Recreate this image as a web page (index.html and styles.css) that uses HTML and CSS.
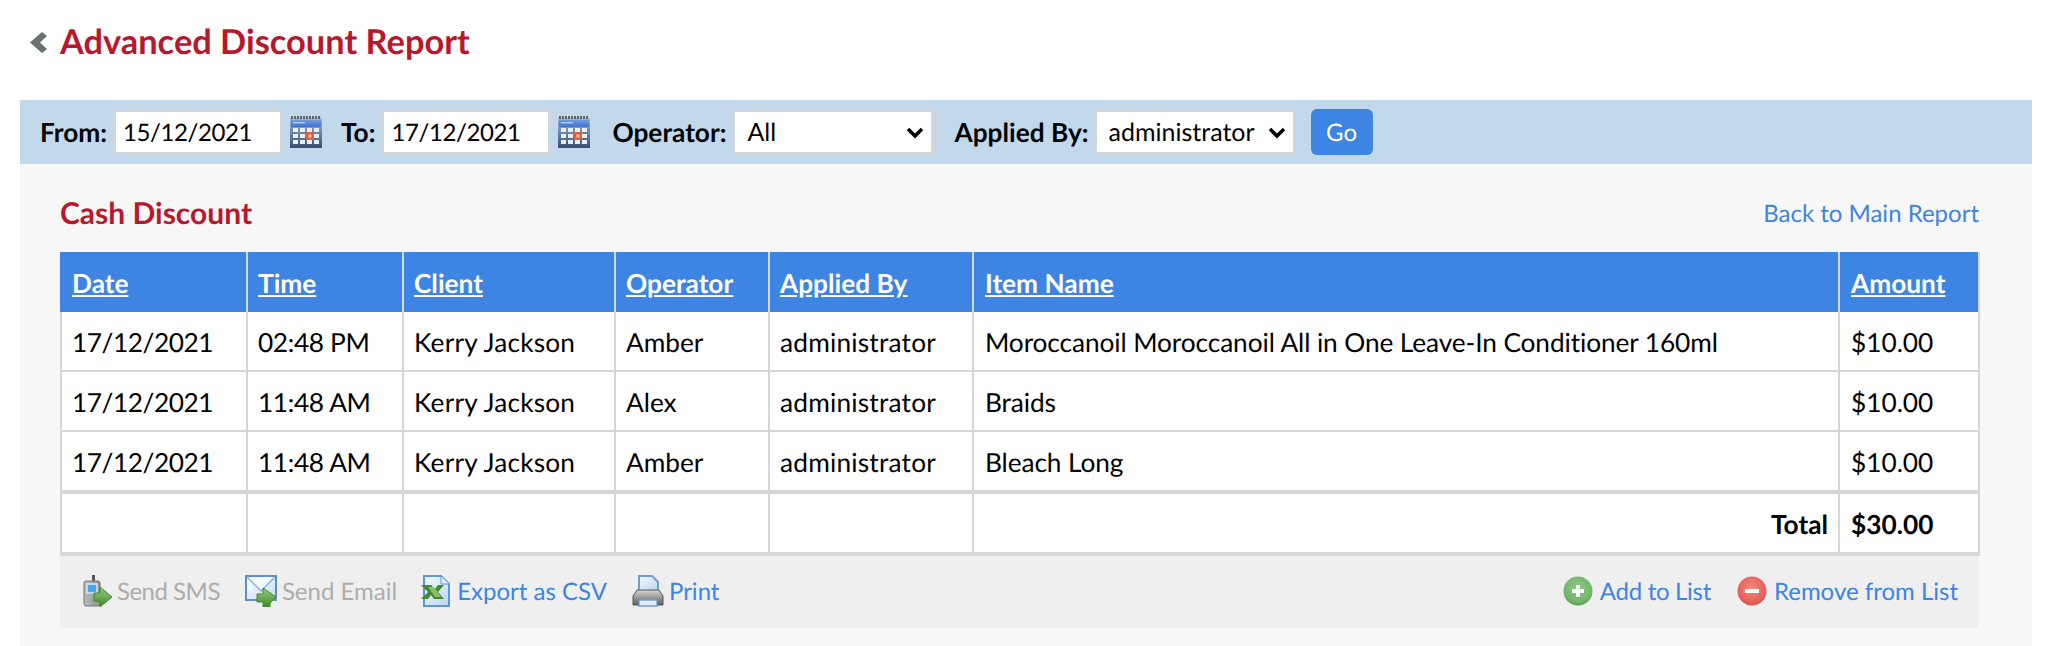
FILE: index.html
```html
<!DOCTYPE html>
<html lang="en">
<head>
<meta charset="utf-8">
<title>Advanced Discount Report</title>
<link rel="stylesheet" href="styles.css">
</head>
<body>
<svg class="defs" width="0" height="0" aria-hidden="true">
  <defs>
    <linearGradient id="calBody" x1="0" y1="0" x2="0" y2="1"><stop offset="0" stop-color="#9db8dc"/><stop offset="1" stop-color="#35506f"/></linearGradient>
    <linearGradient id="calHead" x1="0" y1="0" x2="0" y2="1"><stop offset="0" stop-color="#6f9ce0"/><stop offset="1" stop-color="#3f72c9"/></linearGradient>
    <linearGradient id="arrow" x1="0" y1="0" x2="0" y2="1"><stop offset="0" stop-color="#9ccb7c"/><stop offset="1" stop-color="#3f8a2c"/></linearGradient>
    <linearGradient id="phone" x1="0" y1="0" x2="1" y2="0"><stop offset="0" stop-color="#b9bdbd"/><stop offset="1" stop-color="#8b8f8f"/></linearGradient>
    <linearGradient id="mail" x1="0" y1="0" x2="1" y2="1"><stop offset="0" stop-color="#ffffff"/><stop offset="1" stop-color="#c5daf2"/></linearGradient>
    <linearGradient id="doc" x1="0" y1="0" x2="1" y2="1"><stop offset="0" stop-color="#f3f8fe"/><stop offset="1" stop-color="#bcd6f2"/></linearGradient>
    <linearGradient id="printer" x1="0" y1="0" x2="0" y2="1"><stop offset="0" stop-color="#d6d6d6"/><stop offset="1" stop-color="#5c5c5c"/></linearGradient>
    <radialGradient id="plus" cx=".5" cy=".4" r=".6"><stop offset="0" stop-color="#8fc985"/><stop offset=".8" stop-color="#74b56c"/><stop offset="1" stop-color="#5d9a57"/></radialGradient>
    <radialGradient id="minus" cx=".5" cy=".4" r=".6"><stop offset="0" stop-color="#f08a80"/><stop offset=".8" stop-color="#e8605a"/><stop offset="1" stop-color="#c75a52"/></radialGradient>
    <symbol id="i-cal" viewBox="0 0 32 32">
      <rect x="0" y="2" width="32" height="30" fill="url(#calBody)"/>
      <path d="M1 1.500h30" stroke="#666" stroke-width="3" stroke-dasharray="2 1"/>
      <rect x="1" y="4" width="30" height="7" fill="url(#calHead)"/>
      <rect x="3" y="6" width="12" height="1.500" fill="#a9c6ee"/>
      <g fill="#e9f0f9">
        <rect x="3" y="12" width="5" height="4"/><rect x="10" y="12" width="5" height="4"/><rect x="17" y="12" width="5" height="4"/><rect x="24" y="12" width="5" height="4"/>
        <rect x="3" y="18" width="5" height="4"/><rect x="10" y="18" width="5" height="4"/><rect x="24" y="18" width="5" height="4"/>
        <rect x="3" y="24" width="5" height="4"/><rect x="10" y="24" width="5" height="4"/><rect x="17" y="24" width="5" height="4"/><rect x="24" y="24" width="5" height="4"/>
      </g>
      <rect x="16" y="16" width="8" height="8" fill="#e2603a"/>
      <rect x="18.500" y="18.500" width="3" height="3" fill="#f2c4b4"/>
    </symbol>
    <symbol id="i-sms" viewBox="0 0 30 32">
      <rect x="9" y="0" width="3" height="7" fill="#555"/>
      <rect x="1" y="6" width="16" height="25" rx="2" fill="url(#phone)" stroke="#777"/>
      <rect x="4" y="9" width="10" height="9" fill="#4fa3ec" stroke="#d6ecfb" stroke-width="1.500"/>
      <path d="M11 18h6v-6l12 10-12 10v-6h-6z" fill="url(#arrow)" stroke="#3b8a2c"/>
    </symbol>
    <symbol id="i-mail" viewBox="0 0 32 32">
      <rect x="1" y="1" width="30" height="24" fill="url(#mail)" stroke="#5f8ec8" stroke-width="2"/>
      <path d="M2 2l14 14L30 2" fill="#f3f8fe" stroke="#8db2de" stroke-width="1.500"/>
      <path d="M12 19h6v-6l13 9-6 6v4h-7v-5h-6z" fill="url(#arrow)" stroke="#3b8a2c"/>
    </symbol>
    <symbol id="i-xls" viewBox="0 0 30 32">
      <path d="M3 1h17l8 8v22H3z" fill="url(#doc)" stroke="#5b96d8" stroke-width="2"/>
      <path d="M20 1v8h8" fill="#e2eefb" stroke="#5b96d8"/>
      <path d="M0 10h10l4 4 3-4h6l-6 7 6 7H13l-3-4-3 4H0l7-7z" fill="#3f8a2c"/>
      <path d="M7 12h6l7 10h-6z" fill="#8abf6a"/>
    </symbol>
    <symbol id="i-print" viewBox="0 0 32 32">
      <path d="M7 1h13l6 6v10H7z" fill="url(#doc)" stroke="#6f9fd6" stroke-width="2"/>
      <path d="M5 15h22l4 6v9H1v-9z" fill="url(#printer)" stroke="#555"/>
      <rect x="7" y="25" width="18" height="6" fill="#e4eefa" stroke="#6f9fd6" stroke-width="1.500"/>
    </symbol>
    <symbol id="i-plus" viewBox="0 0 30 30">
      <circle cx="15" cy="15" r="14.500" fill="url(#plus)"/>
      <path d="M15 9v12M9 15h12" stroke="#fff" stroke-width="4"/>
    </symbol>
    <symbol id="i-minus" viewBox="0 0 30 30">
      <circle cx="15" cy="15" r="14.500" fill="url(#minus)"/>
      <path d="M8 15h14" stroke="#fff" stroke-width="4"/>
    </symbol>
  </defs>
</svg>

<header class="page-head">
  <a class="back" href="#" aria-label="Back">
    <svg class="back-icon" viewBox="0 0 17 21"><path d="M12 0l5 4-7 6.500 7 6.500-5 4L0 10.500z" fill="#6b7071"/></svg>
  </a>
  <h1 class="title">Advanced Discount Report</h1>
</header>

<form class="filter">
  <label class="f-label f-from" for="from">From:</label>
  <input class="f-input" id="from" type="text" value="15/12/2021">
  <svg class="cal"><use href="#i-cal"/></svg>
  <label class="f-label f-to" for="to">To:</label>
  <input class="f-input" id="to" type="text" value="17/12/2021">
  <svg class="cal"><use href="#i-cal"/></svg>
  <label class="f-label f-op" for="op">Operator:</label>
  <span class="sel sel-op">
    <select id="op" class="f-select"><option>All</option></select>
    <svg class="chev" viewBox="0 0 18 12"><path d="M2 2l7 7 7-7" fill="none" stroke="#000" stroke-width="3.500"/></svg>
  </span>
  <label class="f-label f-by" for="by">Applied By:</label>
  <span class="sel sel-by">
    <select id="by" class="f-select"><option>administrator</option></select>
    <svg class="chev" viewBox="0 0 18 12"><path d="M2 2l7 7 7-7" fill="none" stroke="#000" stroke-width="3.500"/></svg>
  </span>
  <button class="go" type="button">Go</button>
</form>

<main class="panel">
  <div class="panel-head">
    <h2 class="subtitle">Cash Discount</h2>
    <a class="link" href="#">Back to Main Report</a>
  </div>
  <table class="report">
    <colgroup>
      <col class="c1"><col class="c2"><col class="c3"><col class="c4"><col class="c5"><col class="c6"><col class="c7">
    </colgroup>
    <thead>
      <tr>
        <th><a href="#">Date</a></th><th><a href="#">Time</a></th><th><a href="#">Client</a></th><th><a href="#">Operator</a></th><th><a href="#">Applied By</a></th><th class="item"><a href="#">Item Name</a></th><th class="amt"><a href="#">Amount</a></th>
      </tr>
    </thead>
    <tbody>
      <tr><td class="date">17/12/2021</td><td class="time">02:48 PM</td><td class="wide">Kerry Jackson</td><td>Amber</td><td class="wide">administrator</td><td class="item name">Moroccanoil Moroccanoil All in One Leave-In Conditioner 160ml</td><td class="amt">$10.00</td></tr>
      <tr><td class="date">17/12/2021</td><td class="time">11:48 AM</td><td class="wide">Kerry Jackson</td><td>Alex</td><td class="wide">administrator</td><td class="item name">Braids</td><td class="amt">$10.00</td></tr>
      <tr class="last"><td class="date">17/12/2021</td><td class="time">11:48 AM</td><td class="wide">Kerry Jackson</td><td>Amber</td><td class="wide">administrator</td><td class="item name">Bleach Long</td><td class="amt">$10.00</td></tr>
    </tbody>
    <tfoot>
      <tr><td></td><td></td><td></td><td></td><td></td><td class="total-label">Total</td><td class="total amt">$30.00</td></tr>
    </tfoot>
  </table>
  <div class="actions">
    <div class="act-group">
      <span class="act disabled a-sms"><svg class="ico w30"><use href="#i-sms"/></svg>Send SMS</span>
      <span class="act disabled a-mail"><svg class="ico w32"><use href="#i-mail"/></svg>Send Email</span>
      <a class="act a-xls" href="#"><svg class="ico w30"><use href="#i-xls"/></svg>Export as CSV</a>
      <a class="act a-print" href="#"><svg class="ico w32"><use href="#i-print"/></svg>Print</a>
    </div>
    <div class="act-group">
      <a class="act a-add" href="#"><svg class="ico w30 round"><use href="#i-plus"/></svg>Add to List</a>
      <a class="act a-rem" href="#"><svg class="ico w30 round"><use href="#i-minus"/></svg>Remove from List</a>
    </div>
  </div>
</main>
</body>
</html>
```

FILE: styles.css
```css
* { box-sizing: border-box; }
html, body { margin: 0; padding: 0; background: #fff; }
body { font-family: Lato, "Open Sans", sans-serif; font-size: 24px; color: #000; height: 646px; overflow: hidden; text-rendering: geometricPrecision; }
.defs { display: block; height: 0; }

.page-head { display: flex; align-items: center; height: 100px; padding: 0 0 16px 30px; }
.back { display: flex; width: 30px; }
.back-icon { width: 17px; height: 21px; }
.title { margin: 0; font-size: 34.4px; font-weight: 700; color: #b9172d; line-height: 1.2; }

.filter { display: flex; align-items: center; height: 64px; margin-left: 20px; width: 2012px; padding-left: 20px; background: #c2d9ec; }
.f-label { font-size: 26.25px; font-weight: 700; line-height: 1; white-space: nowrap; }
.f-input, .f-select { height: 44px; border: 2px solid #d6d6d6; background: #fff; font-family: inherit; font-size: 24px; text-rendering: inherit; color: #000; border-radius: 0; outline: none; }
.f-input { width: 168px; padding: 0 7px; margin-left: 7px; letter-spacing: -.4px; }
.cal { width: 32px; height: 32px; margin-left: 8px; flex: none; filter: blur(.4px); }
.f-to { margin-left: 19px; }
.f-op { margin-left: 22px; }
.f-by { margin-left: 21px; }
.sel { position: relative; display: block; flex: none; margin-left: 7px; }
.sel-op { width: 200px; }
.sel-by { width: 200px; margin-left: 6px; }
.f-select { display: block; width: 100%; padding: 0 0 0 12px; font-size: 25px; appearance: none; -webkit-appearance: none; }
.chev { position: absolute; right: 9px; top: 17px; width: 18px; height: 12px; pointer-events: none; }
.go { width: 62px; height: 46px; margin-left: 16px; border: 0; border-radius: 6px; background: #3e84e3; color: #fff; font-family: inherit; font-size: 24px; text-rendering: inherit; padding: 0; }

.panel { margin-left: 20px; width: 2012px; height: 482px; padding: 0 52px 0 40px; background: #f7f7f7; }
.panel-head { display: flex; justify-content: space-between; align-items: center; height: 88px; padding: 10px 0 0; }
.subtitle { margin: 0; font-size: 30px; font-weight: 700; color: #b9172d; line-height: 1.2; }
.link, .act { color: #3e84e3; text-decoration: none; }
.link { margin-right: 1px; }

.report { width: 1920px; table-layout: fixed; border-collapse: separate; border-spacing: 0; background: #fff; font-size: 26.25px; }
.c1 { width: 188px; } .c2 { width: 156px; } .c3 { width: 212px; } .c4 { width: 154px; }
.c5 { width: 204px; } .c6 { width: 866px; } .c7 { width: 140px; }
.report th, .report td { padding: 0 10px; text-align: left; font-weight: 400; border-right: 2px solid #d6d6d6; white-space: nowrap; }
.report th:first-child, .report td:first-child { border-left: 2px solid #d6d6d6; }
.report th { height: 60px; padding-top: 2px; background: #3e84e3; font-weight: 700; }
.report th:first-child { border-left-color: #3e84e3; }
.report th a { color: #fff; text-decoration: underline; }
.report td { height: 60px; padding-top: 1px; border-bottom: 2px solid #d6d6d6; }
.report tr.last td { height: 62px; border-bottom-width: 4px; }
.report tfoot td { height: 62px; border-bottom-width: 4px; }
.report .item { padding-left: 11px; }
.report .amt { padding-left: 11px; }
.report .name { letter-spacing: -.1px; }
.report .date { letter-spacing: -.45px; }
.report .time { letter-spacing: -.35px; }
.report .wide { letter-spacing: .2px; }
.report .total-label { text-align: right; font-weight: 700; }
.report .total { font-weight: 700; }

.actions { display: flex; justify-content: space-between; align-items: center; width: 1918px; height: 72px; padding: 0 20px 2px 23px; background: #efefef; }
.act-group { display: flex; align-items: center; }
.act { display: flex; align-items: center; }
.disabled { color: #adadad; }
.ico { height: 32px; flex: none; filter: blur(.4px); }
.w30 { width: 30px; }
.w32 { width: 32px; }
.round { height: 30px; }
.a-sms { letter-spacing: -.5px; }
.a-sms .ico { margin-right: 4px; }
.a-mail { margin-left: 25px; }
.a-mail .ico { margin-right: 5px; }
.a-xls { margin-left: 24px; }
.a-xls .ico { margin-right: 6px; }
.a-print { margin-left: 25px; }
.a-print .ico { margin-right: 5px; }
.a-add { letter-spacing: -.3px; }
.a-add .ico { margin-right: 7px; }
.a-rem { margin-left: 26px; }
.a-rem .ico { margin-right: 7px; }
```
